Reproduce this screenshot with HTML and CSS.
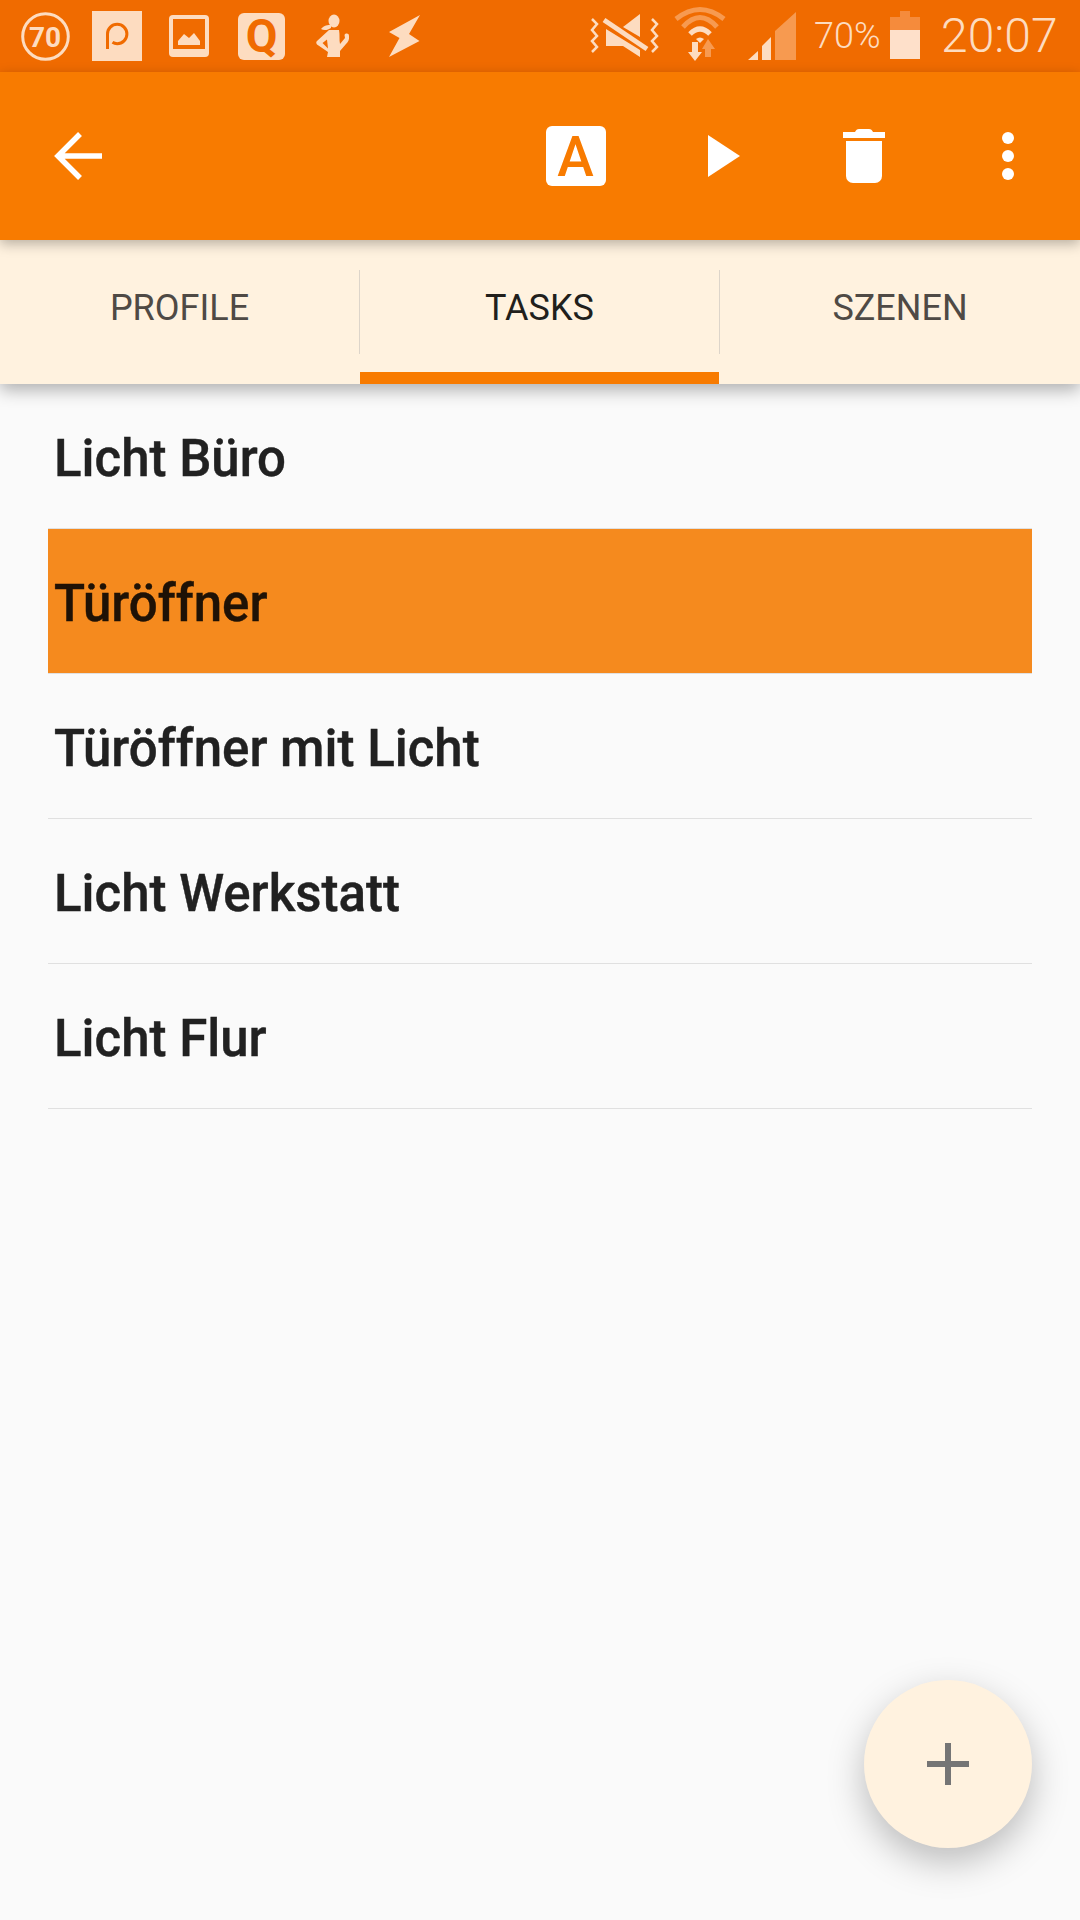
FILE: index.html
```html
<!DOCTYPE html>
<html lang="de">
<head>
<meta charset="utf-8">
<title>Tasks</title>
<link rel="stylesheet" href="styles.css">
</head>
<body>
<div class="screen">
  <header class="statusbar">
    <svg class="ic" width="80" height="72" viewBox="0 0 80 72"><circle class="ring" cx="45.5" cy="36.5" r="22.8"/><text class="t70" x="45" y="47" text-anchor="middle">70</text></svg>
    <svg class="ic" width="75" height="72" viewBox="80 0 75 72"><rect class="lt" x="92" y="11" width="50" height="50"/><path class="plogo" d="M107.5 49V34A9.7 9.7 0 1 1 117.2 43.7C115.4 43.7 114 43.3 112.5 42.3"/></svg>
    <svg class="ic" width="69" height="72" viewBox="155 0 69 72"><rect class="lt" x="169" y="15" width="40" height="42" rx="4"/><rect class="bg" x="173" y="19" width="32" height="30"/><path class="lt" d="M178 45V41L184 34L189 38L194 33L200 41V45Z"/></svg>
    <svg class="ic" width="76" height="72" viewBox="224 0 76 72"><rect class="lt" x="238" y="13" width="47" height="47" rx="6"/><text class="tq" x="261.5" y="52" text-anchor="middle">Q</text></svg>
    <svg class="ic" width="70" height="72" viewBox="300 0 70 72"><ellipse class="lt" cx="334" cy="21" rx="5.5" ry="6.5"/><path class="lt" d="M321 29C324 25 328 25 331 25L331 28C328 30 324 31 321 29Z"/><path class="lt" fill-rule="evenodd" d="M329 30L339 30C340 35 339 40 340 44L345 38L344.5 35C345.5 33 349 33 349 36C349.5 40 348 42 346 44L340 51V57H327L328 52L317 44.5C316 43 316 42 317 41ZM322.5 43L328 48.5L327 39.5Z"/></svg>
    <svg class="ic" width="70" height="72" viewBox="370 0 70 72"><path class="lt" d="M420 15L389 32L399.5 38L389 57L419.5 41L409 34Z"/></svg>
    <div class="spacer"></div>
    <svg class="ic" width="83" height="72" viewBox="585 0 83 72"><path class="zig" d="M592 19L597 24L592 30L597 36L592 41L597 47L592 52"/><path class="zig" d="M652 19L657 24L652 30L657 36L652 41L657 47L652 52"/><path class="lt" d="M623 27L640 14V37Z"/><path class="lt" d="M606 29L640 50V57L623 46H606Z"/><path class="slash" d="M604 20L647 49"/></svg>
    <svg class="ic" width="72" height="72" viewBox="668 0 72 72"><path class="arc fade" d="M676 19Q700 0 724 19"/><path class="arc fade" d="M683 27Q700 8 717 27"/><path class="arc" d="M690 34Q700 24 710 34"/><path class="lt" d="M696 39Q700 36 704 39L700 43Z"/><path class="lt" d="M692 42H698V52H702L695 61L688 52H692Z"/><path class="fd" d="M705 57V49H702L708 39L715 49H711V57Z"/></svg>
    <svg class="ic" width="70" height="72" viewBox="740 0 70 72"><path class="lt" d="M748 60L758 51V60Z"/><path class="lt" d="M762 46L771 37V60H762Z"/><path class="fd" d="M775 31L796 12V60H775Z"/></svg>
    <span class="pct">70%</span>
    <svg class="ic batt" width="30" height="72" viewBox="890 0 30 72"><rect class="fd2" x="900" y="11" width="10" height="6"/><rect class="fd2" x="890" y="17" width="30" height="13"/><rect class="lt2" x="890" y="30" width="30" height="29"/></svg>
    <span class="clock">20:07</span>
  </header>

  <nav class="appbar">
    <svg class="ic" width="130" height="168" viewBox="0 72 130 168"><path class="arrow" d="M102 156H58M80 134L58 156L80 178"/></svg>
    <div class="spacer"></div>
    <svg class="ic" width="120" height="168" viewBox="530 72 120 168"><rect class="wh" x="546" y="126" width="60" height="60" rx="6"/><text class="ta" x="575.5" y="176" text-anchor="middle">A</text></svg>
    <svg class="ic" width="140" height="168" viewBox="650 72 140 168"><path class="wh" d="M708 135L740 156L708 177Z"/></svg>
    <svg class="ic" width="150" height="168" viewBox="790 72 150 168"><path class="wh" d="M843 132H855C856 130 857 129 859 129H869C871 129 872 130 873 132H885V138H843Z"/><path class="wh" d="M846 141H882V176A7 7 0 0 1 875 183H853A7 7 0 0 1 846 176Z"/></svg>
    <svg class="ic" width="140" height="168" viewBox="940 72 140 168"><circle class="wh" cx="1008" cy="138" r="6"/><circle class="wh" cx="1008" cy="156" r="6"/><circle class="wh" cx="1008" cy="174" r="6"/></svg>
  </nav>

  <div class="tabs">
    <div class="tab">PROFILE</div>
    <div class="sep"></div>
    <div class="tab active">TASKS</div>
    <div class="sep"></div>
    <div class="tab">SZENEN</div>
  </div>

  <ul class="list">
    <li class="row">Licht Büro</li>
    <li class="row selected">Türöffner</li>
    <li class="row">Türöffner mit Licht</li>
    <li class="row">Licht Werkstatt</li>
    <li class="row">Licht Flur</li>
  </ul>

  <button class="fab" aria-label="Hinzufügen">
    <svg width="42" height="42" viewBox="0 0 42 42"><path class="plus" d="M18 0H24V18H42V24H24V42H18V24H0V18H18Z"/></svg>
  </button>
</div>
</body>
</html>
```

FILE: styles.css
```css
* {
  box-sizing: border-box;
}

html,
body {
  margin: 0;
  padding: 0;
}

body {
  font-family: Roboto, "Liberation Sans", sans-serif;
  background: #fafafa;
}

.screen {
  position: relative;
  width: 1080px;
  height: 1920px;
  overflow: hidden;
  background: #fafafa;
}

.ic {
  display: block;
  flex: none;
}

.spacer {
  flex: 1;
}

/* status bar */
.statusbar {
  display: flex;
  align-items: center;
  height: 72px;
  background: #f06b00;
  color: #fddcc0;
}

.lt {
  fill: #fddcc0;
}

.bg {
  fill: #f06b00;
}

.fd {
  fill: #f79a50;
}

.fd2 {
  fill: #f58b3c;
}

.lt2 {
  fill: #fee0ca;
}

.ring {
  fill: none;
  stroke: #fddcc0;
  stroke-width: 3;
}

.t70 {
  font-family: Roboto, sans-serif;
  font-size: 28px;
  font-weight: 700;
  fill: #fddcc0;
}

.tq {
  font-family: Roboto, sans-serif;
  font-size: 46px;
  font-weight: 700;
  fill: #f06b00;
}

.plogo {
  fill: none;
  stroke: #f06b00;
  stroke-width: 3;
}

.zig {
  fill: none;
  stroke: #fddcc0;
  stroke-width: 2.5;
}

.slash {
  fill: none;
  stroke: #fddcc0;
  stroke-width: 5;
}

.arc {
  fill: none;
  stroke: #fddcc0;
  stroke-width: 5;
}

.arc.fade {
  stroke: #f79a50;
}

.pct {
  width: 80px;
  padding-left: 4px;
  font-size: 36px;
  font-weight: 300;
  line-height: 72px;
}

.clock {
  width: 160px;
  padding-left: 21px;
  font-size: 48px;
  font-weight: 300;
  line-height: 72px;
}

/* app bar */
.appbar {
  position: relative;
  z-index: 3;
  display: flex;
  height: 168px;
  background: #f87b00;
  box-shadow: 0 4px 12px rgba(0, 0, 0, 0.28);
}

.wh {
  fill: #fff;
}

.arrow {
  fill: none;
  stroke: #fff;
  stroke-width: 5.5;
}

.ta {
  font-family: Roboto, sans-serif;
  font-size: 55px;
  font-weight: 500;
  fill: #f87b00;
}

/* tabs */
.tabs {
  position: relative;
  z-index: 2;
  display: grid;
  grid-template-columns: 359px 1px 359px 1px 360px;
  height: 144px;
  background: #fff2df;
  box-shadow: 0 6px 16px rgba(0, 0, 0, 0.3);
}

.tab {
  display: flex;
  align-items: center;
  justify-content: center;
  padding-top: 4px;
  border-bottom: 12px solid transparent;
  font-size: 36px;
  color: #4f4a45;
}

.tab.active {
  border-bottom-color: #f87b00;
  color: #211f1c;
}

.sep {
  height: 84px;
  margin-top: 30px;
  background: #ddd5ca;
}

/* list */
.list {
  margin: 0;
  padding: 0 48px;
  list-style: none;
}

.row {
  display: flex;
  align-items: center;
  height: 145px;
  padding-top: 5px;
  padding-left: 6px;
  border-bottom: 1px solid #e0e0e0;
  font-size: 51px;
  font-weight: 500;
  color: #212121;
  -webkit-text-stroke: 0.4px currentColor;
}

.row.selected {
  background: #f58a1e;
  color: #1f1206;
}

/* floating button */
.fab {
  position: absolute;
  left: 864px;
  top: 1680px;
  display: flex;
  align-items: center;
  justify-content: center;
  width: 168px;
  height: 168px;
  padding: 0;
  border: 0;
  border-radius: 50%;
  background: #fff2df;
  box-shadow: 0 14px 36px rgba(0, 0, 0, 0.25);
}

.plus {
  fill: #757575;
}
```
